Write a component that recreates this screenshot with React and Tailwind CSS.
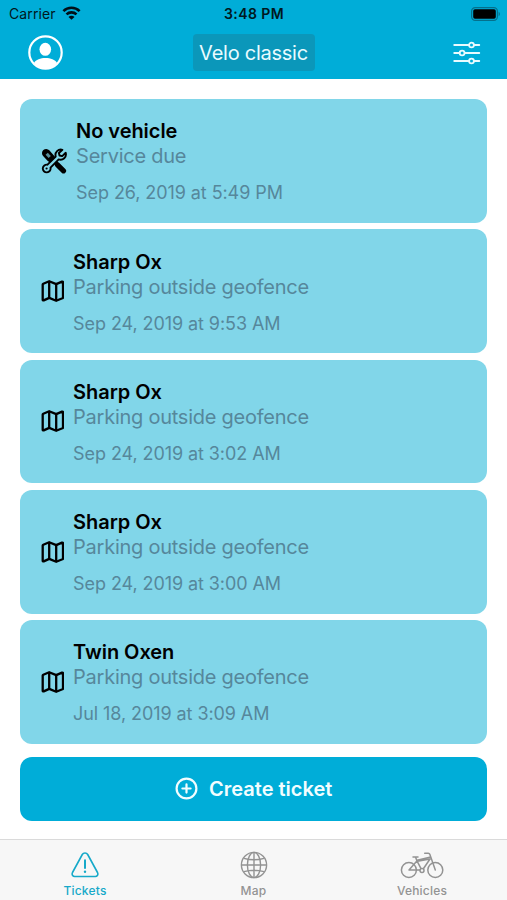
const TICKETS = [
  { id: 1, type: 'service', vehicle: 'No vehicle', reason: 'Service due', date: 'Sep 26, 2019 at 5:49 PM' },
  { id: 2, type: 'geofence', vehicle: 'Sharp Ox', reason: 'Parking outside geofence', date: 'Sep 24, 2019 at 9:53 AM' },
  { id: 3, type: 'geofence', vehicle: 'Sharp Ox', reason: 'Parking outside geofence', date: 'Sep 24, 2019 at 3:02 AM' },
  { id: 4, type: 'geofence', vehicle: 'Sharp Ox', reason: 'Parking outside geofence', date: 'Sep 24, 2019 at 3:00 AM' },
  { id: 5, type: 'geofence', vehicle: 'Twin Oxen', reason: 'Parking outside geofence', date: 'Jul 18, 2019 at 3:09 AM' },
]

function WifiIcon() {
  return (
    <svg className="-mt-px" width="19" height="14" viewBox="0 0 18 14" fill="none" stroke="#001018" strokeWidth="2.6">
      <path d="M.9 5.1a11.5 11.5 0 0 1 16.2 0" />
      <path d="M4 8.4a7.1 7.1 0 0 1 10 0" />
      <path d="M9 13.8 6 10.9a4.200 4.200 0 0 1 6 0Z" fill="#001018" stroke="none" />
    </svg>
  )
}

function BatteryIcon() {
  return (
    <svg width="30" height="14" viewBox="0 0 30 14">
      <rect x=".6" y=".6" width="25.8" height="12.8" rx="3.6" fill="none" stroke="#04708c" strokeWidth="1.2" />
      <rect x="2.2" y="2.2" width="22.6" height="9.6" rx="1.8" fill="#000" />
      <path d="M27.6 4.8c1.8.8 1.8 3.6 0 4.4Z" fill="#04708c" />
    </svg>
  )
}

function ProfileIcon() {
  return (
    <svg width="35" height="35" viewBox="0 0 35 35" fill="none">
      <circle cx="17.5" cy="17.5" r="16.2" stroke="#fff" strokeWidth="2.2" />
      <ellipse cx="17.3" cy="14.300" rx="5.800" ry="6.500" fill="#fff" />
      <path d="M6 28c1.800-3.500 6.500-5 11.500-5s9.700 1.500 11.500 5c-2.700 3.600-6.900 5.600-11.500 5.600S8.700 31.600 6 28Z" fill="#fff" />
    </svg>
  )
}

function FiltersIcon() {
  return (
    <svg width="28" height="24" viewBox="0 0 28 24" fill="none" stroke="#e9fbff" strokeWidth="1.8" strokeLinecap="round">
      <path d="M1.200 4H15.700M21.300 4H26.300M1.200 12H6.300M11.900 12H26.300M1.200 20H15.700M21.300 20H26.300" />
      <circle cx="18.500" cy="4" r="2.400" />
      <circle cx="9.100" cy="12" r="2.400" />
      <circle cx="18.500" cy="20" r="2.400" />
    </svg>
  )
}

function ToolsIcon() {
  return (
    <svg className="shrink-0" width="26" height="26" viewBox="0 0 26 26" strokeLinejoin="round" strokeLinecap="round">
      {/* screwdriver: thick grip top left, blade bottom right */}
      <path d="M5.200 5.200 9.600 10" stroke="#000" strokeWidth="8.400" />
      <path d="m11 11 4 4" stroke="#000" strokeWidth="4" />
      <path d="m16.500 16.800 6 6" stroke="#000" strokeWidth="5.200" />
      <path d="m5.700 5.700 3 3.300" stroke="#568f9c" strokeWidth="3" strokeLinecap="butt" />
      {/* wrench */}
      <path
        d="M21.400 1.800a5.400 5.400 0 0 0-6.700 6.700L6.500 16.700a3.900 3.900 0 1 0 3 3l8.200-8.300a5.400 5.400 0 0 0 7-6.600l-3.500 3.300-2.700-.6-.6-2.500Z"
        fill="#81d6e9"
        stroke="#000"
        strokeWidth="1.900"
      />
      <circle cx="5.600" cy="20.500" r="1.100" fill="#000" />
    </svg>
  )
}

function FoldedMapIcon() {
  return (
    <svg className="shrink-0" width="23" height="22" viewBox="0 0 23 22" fill="none" stroke="#000" strokeWidth="2.300" strokeLinejoin="round">
      <path d="M1.700 4.600c0-.5.200-.7.600-.9L8.200 1.200l7 2.900L21 1.600c.6-.2 1 .1 1 .7v15c0 .5-.2.800-.6 1l-6.200 2.500-7-2.900-5.500 2.500c-.6.200-1-.1-1-.7Z" />
      <path d="M8.200 1.200v16.700M15.200 4.100v16.700" />
    </svg>
  )
}

function PlusIcon() {
  return (
    <svg width="23" height="23" viewBox="0 0 23 23" fill="none" stroke="#f2fdff" strokeWidth="2.200" strokeLinecap="round">
      <circle cx="11.500" cy="11.500" r="9.900" />
      <path d="M11.500 7.400v8.200M7.400 11.500h8.200" />
    </svg>
  )
}

function WarningIcon() {
  return (
    <svg width="28" height="26" viewBox="0 0 28 26" fill="none" stroke="currentColor" strokeWidth="1.600" strokeLinejoin="round">
      <path d="M11.300 2.500c1.200-2 4.200-2 5.400 0l9.800 18c1 2-.2 4-2.300 4H3.800c-2.100 0-3.300-2-2.300-4Z" />
      <path d="M14 8.300v7.700" strokeWidth="2" strokeLinecap="round" />
      <circle cx="14" cy="19.700" r="1.200" fill="currentColor" stroke="none" />
    </svg>
  )
}

function GlobeIcon() {
  return (
    <svg width="28" height="28" viewBox="0 0 28 28" fill="none" stroke="currentColor" strokeWidth="1.400">
      <circle cx="14" cy="14" r="12.600" />
      <ellipse cx="14" cy="14" rx="6.600" ry="12.600" />
      <path d="M14 1.400v25.200M1.400 14h25.200M4 7.300c6 1.800 14 1.800 20 0M4 20.700c6-1.800 14-1.800 20 0" />
    </svg>
  )
}

function BikeIcon() {
  return (
    <svg width="44" height="28" viewBox="0 0 44 28" fill="none" stroke="currentColor" strokeWidth="1.500" strokeLinejoin="round" strokeLinecap="round">
      <circle cx="8.900" cy="19" r="7.500" />
      <circle cx="35.300" cy="19" r="7.500" />
      <path d="M13 6h5M15.500 6l1.600 4.200 4.700 9M17.100 9.800 9 19h12M17.500 10.300l12.500-2.300-7.500 11M24.700 2.200h3.600c.9 0 1.300.4 1.500 1L35.300 19M17.100 9.200 29.700 6.300" />
      <circle cx="22" cy="19.500" r="2" fill="#f7f7f7" />
    </svg>
  )
}

function TicketCard({ ticket }) {
  return (
    <div className="flex h-[123.700px] items-center gap-[9px] rounded-xl bg-[#81d6e9] pl-[20.700px]">
      {ticket.type === 'service' ? <ToolsIcon /> : <FoldedMapIcon />}
      <div className="whitespace-nowrap pt-[2px]">
        <p className="text-[20px] font-semibold leading-[25px] tracking-[-0.050px] text-black">{ticket.vehicle}</p>
        <p className="text-[20px] leading-[25px] tracking-[-0.250px] text-[#56879b]">{ticket.reason}</p>
        <p className="mt-[13px] text-[18px] leading-[22px] tracking-[-0.080px] text-[#56879b]">{ticket.date}</p>
      </div>
    </div>
  )
}

function Tab({ icon, label, active }) {
  return (
    <button className={`flex w-[168.500px] flex-col items-center ${active ? 'text-[#16a9c9]' : 'text-[#939393]'}`}>
      <span className="flex h-7 items-center">{icon}</span>
      <span className="mt-1 text-[12px] font-medium leading-[15px] tracking-[0.2px]">{label}</span>
    </button>
  )
}

export default function App() {
  return (
    <div className="flex h-[900px] w-[507px] flex-col overflow-hidden bg-white font-[Inter,'Liberation_Sans',sans-serif]">
      <header className="h-[79px] shrink-0 bg-[#00add8]">
        <div className="grid h-[27px] grid-cols-3 items-center pl-[7px] pr-[6px] text-[14px] leading-none text-[#001820]">
          <div className="flex items-center gap-[6px] pl-[2px]">
            <span className="tracking-[0.100px]">Carrier</span>
            <WifiIcon />
          </div>
          <span className="text-center font-semibold tracking-[0.400px]">3:48 PM</span>
          <div className="flex justify-end">
            <BatteryIcon />
          </div>
        </div>
        <div className="grid h-[51px] grid-cols-[1fr_122px_1fr] items-center pl-7 pr-[26px]">
          <ProfileIcon />
          <button className="-ml-px h-[37px] w-[122px] whitespace-nowrap rounded bg-[#0b97ba] text-[20px] tracking-[-0.250px] text-[#e9fbff]">
            Velo classic
          </button>
          <div className="flex justify-end">
            <FiltersIcon />
          </div>
        </div>
      </header>

      <main className="flex flex-1 flex-col pl-[20.400px] pr-5 pt-5">
        <div className="flex flex-col gap-[6.600px]">
          {TICKETS.map((t) => (
            <TicketCard key={t.id} ticket={t} />
          ))}
        </div>
        <button className="mt-[13px] flex h-[64px] items-center justify-center gap-[11px] rounded-xl bg-[#00add8] text-[20px] font-semibold text-[#f2fdff]">
          <PlusIcon />
          Create ticket
        </button>
      </main>

      <nav className="flex h-[61px] shrink-0 justify-center border-t border-[#dadada] bg-[#f7f7f7] pt-[11px]">
        <Tab icon={<WarningIcon />} label="Tickets" active />
        <Tab icon={<GlobeIcon />} label="Map" />
        <Tab icon={<BikeIcon />} label="Vehicles" />
      </nav>
    </div>
  )
}
